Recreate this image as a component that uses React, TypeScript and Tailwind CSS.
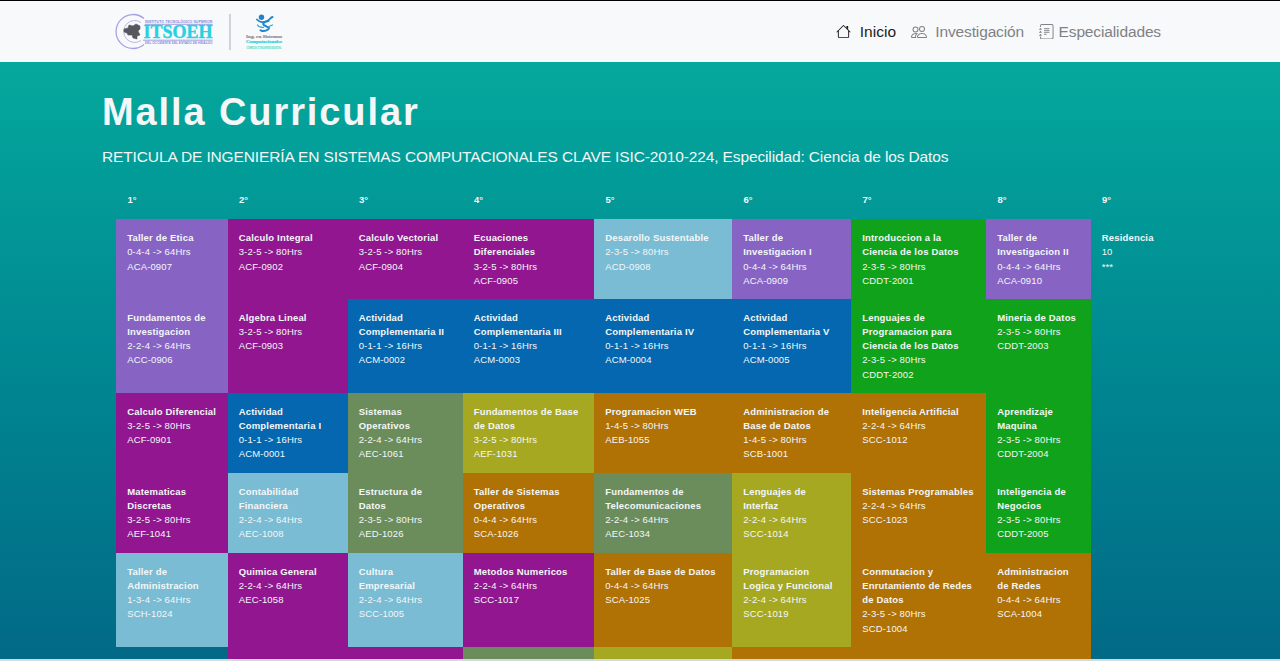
import { BsPeople, BsJournalText } from "react-icons/bs";

type Cell = { name: string[]; hours: string; code: string; color: string };

const violet = "bg-[#8764c4]";
const purple = "bg-[#91168f]";
const sky = "bg-[#7abcd4]";
const green = "bg-[#10a21a]";
const blue = "bg-[#0467b0]";
const sage = "bg-[#6b8d5c]";
const olive = "bg-[#a5a820]";
const orange = "bg-[#b07105]";
const none = "bg-transparent";

const c = (name: string, hours: string, code: string, color: string): Cell => ({
  name: name.split("|"),
  hours,
  code,
  color,
});

const h16 = "0-1-1 -> 16Hrs";
const h044 = "0-4-4 -> 64Hrs";
const h224 = "2-2-4 -> 64Hrs";
const h134 = "1-3-4 -> 64Hrs";
const h325 = "3-2-5 -> 80Hrs";
const h235 = "2-3-5 -> 80Hrs";
const h145 = "1-4-5 -> 80Hrs";

const cells: (Cell | null)[] = [
  c("Taller de Etica", h044, "ACA-0907", violet),
  c("Calculo Integral", h325, "ACF-0902", purple),
  c("Calculo Vectorial", h325, "ACF-0904", purple),
  c("Ecuaciones|Diferenciales", h325, "ACF-0905", purple),
  c("Desarollo Sustentable", h235, "ACD-0908", sky),
  c("Taller de|Investigacion I", h044, "ACA-0909", violet),
  c("Introduccion a la|Ciencia de los Datos", h235, "CDDT-2001", green),
  c("Taller de|Investigacion II", h044, "ACA-0910", violet),
  c("Residencia", "10", "***", none),

  c("Fundamentos de|Investigacion", h224, "ACC-0906", violet),
  c("Algebra Lineal", h325, "ACF-0903", purple),
  c("Actividad|Complementaria II", h16, "ACM-0002", blue),
  c("Actividad|Complementaria III", h16, "ACM-0003", blue),
  c("Actividad|Complementaria IV", h16, "ACM-0004", blue),
  c("Actividad|Complementaria V", h16, "ACM-0005", blue),
  c("Lenguajes de|Programacion para|Ciencia de los Datos", h235, "CDDT-2002", green),
  c("Mineria de Datos", h235, "CDDT-2003", green),
  null,

  c("Calculo Diferencial", h325, "ACF-0901", purple),
  c("Actividad|Complementaria I", h16, "ACM-0001", blue),
  c("Sistemas|Operativos", h224, "AEC-1061", sage),
  c("Fundamentos de Base|de Datos", h325, "AEF-1031", olive),
  c("Programacion WEB", h145, "AEB-1055", orange),
  c("Administracion de|Base de Datos", h145, "SCB-1001", orange),
  c("Inteligencia Artificial", h224, "SCC-1012", orange),
  c("Aprendizaje|Maquina", h235, "CDDT-2004", green),
  null,

  c("Matematicas|Discretas", h325, "AEF-1041", purple),
  c("Contabilidad|Financiera", h224, "AEC-1008", sky),
  c("Estructura de|Datos", h235, "AED-1026", sage),
  c("Taller de Sistemas|Operativos", h044, "SCA-1026", orange),
  c("Fundamentos de|Telecomunicaciones", h224, "AEC-1034", sage),
  c("Lenguajes de|Interfaz", h224, "SCC-1014", olive),
  c("Sistemas Programables", h224, "SCC-1023", orange),
  c("Inteligencia de|Negocios", h235, "CDDT-2005", green),
  null,

  c("Taller de|Administracion", h134, "SCH-1024", sky),
  c("Quimica General", h224, "AEC-1058", purple),
  c("Cultura|Empresarial", h224, "SCC-1005", sky),
  c("Metodos Numericos", h224, "SCC-1017", purple),
  c("Taller de Base de Datos", h044, "SCA-1025", orange),
  c("Programacion|Logica y Funcional", h224, "SCC-1019", olive),
  c("Conmutacion y|Enrutamiento de Redes|de Datos", h235, "SCD-1004", orange),
  c("Administracion|de Redes", h044, "SCA-1004", orange),
  null,
];

const lastRow = [none, purple, purple, sage, olive, orange, orange, orange, none];

function HouseIcon() {
  return (
    <svg viewBox="0 0 16 16" fill="currentColor" className="size-[15px]">
      <path d="M2 13.5V7h1v6.5a.5.5 0 0 0 .5.5h9a.5.5 0 0 0 .5-.5V7h1v6.5a1.500 1.500 0 0 1-1.500 1.500h-9A1.500 1.500 0 0 1 2 13.5zm11-11V6l-2-2V2.5a.5.5 0 0 1 .5-.5h1a.5.5 0 0 1 .5.5z" />
      <path d="M7.293 1.5a1 1 0 0 1 1.414 0l6.647 6.646a.5.5 0 0 1-.708.708L8 2.207 1.354 8.854a.5.5 0 1 1-.708-.708L7.293 1.5z" />
    </svg>
  );
}

function InstituteLogo() {
  return (
    <svg viewBox="0 0 102 38" className="h-[38px] w-[102px] overflow-visible" fontFamily="Liberation Sans, sans-serif">
      <path d="M30 5.500 A17 17 0 1 0 30 31.500" fill="none" stroke="#a5a1e6" strokeWidth="1.300" />
      <path d="M27 9.500 A11 11 0 1 0 27 27.500" fill="none" stroke="#b9b6ea" strokeWidth="1" />
      <path d="M10 16l4-1 1-3 4 1 3-2 4 2 0 3-2 2 2 4-3 1 0 3-4-1-1-3-4 0-1-2-3-1z" fill="#55595e" stroke="#55595e" strokeWidth=".6" strokeLinejoin="round" />
      <text x="31" y="10.300" fontSize="4" fontWeight="bold" fill="#8a87dc" textLength="67.500" lengthAdjust="spacingAndGlyphs">INSTITUTO TECNOLÓGICO SUPERIOR</text>
      <path d="M31 11.300H98.500M29 27.200H98.500" stroke="#7c79d8" strokeWidth=".7" />
      <text x="29.500" y="25.300" fontFamily="Liberation Serif, serif" fontSize="18.500" fontWeight="bold" fill="#27d0e2" stroke="#27d0e2" strokeWidth=".4" textLength="69" lengthAdjust="spacingAndGlyphs">ITSOEH</text>
      <text x="31" y="31" fontSize="3.400" fontWeight="bold" fill="#8a87dc" textLength="67.500" lengthAdjust="spacingAndGlyphs">DEL OCCIDENTE DEL ESTADO DE HIDALGO</text>
    </svg>
  );
}

function CareerLogo() {
  return (
    <svg viewBox="0 0 38 38" className="size-[38px] overflow-visible" fontFamily="Liberation Serif, serif" fontWeight="bold">
      <circle cx="16.500" cy="4.200" r="2.700" fill="#1f83cc" />
      <path d="M12 6.500c3 3.500 7 3 10 1.500s3-3 5.500-4" fill="none" stroke="#2088ca" strokeWidth="1.900" strokeLinecap="round" />
      <path d="M23.500 8c-4 .5-7 3-4 4.500s6 2 3.500 4-6 1.500-7.500.8" fill="none" stroke="#2088ca" strokeWidth="2" strokeLinecap="round" />
      <path d="M12.500 12c1.500 2.500 4 2.500 6 2.300M24 13.500l3.500-1.500" fill="none" stroke="#36a4d8" strokeWidth="1.300" strokeLinecap="round" />
      <text x="1" y="24.800" fontSize="4.800" fill="#8b8f96" stroke="#8b8f96" strokeWidth=".2" textLength="36" lengthAdjust="spacingAndGlyphs">Ing. en Sistemas</text>
      <text x="1" y="30.300" fontSize="4.800" fill="#2bcfe2" stroke="#2bcfe2" strokeWidth=".2" textLength="36" lengthAdjust="spacingAndGlyphs">Computacionales</text>
      <text x="1.500" y="35.700" fontSize="3" fill="#5fe0c4" stroke="#5fe0c4" strokeWidth=".15" textLength="35" lengthAdjust="spacingAndGlyphs">CIENCIA Y TALENTO DIGITAL</text>
    </svg>
  );
}

export default function App() {
  return (
    <div className="flex h-[661px] flex-col overflow-hidden bg-white font-['Liberation_Sans',Arial,sans-serif]">
      <header className="flex h-[62px] shrink-0 items-center justify-between border-t border-black bg-[#f8f9fb] pr-[119px] pl-[114px]">
        <div className="flex items-center">
          <InstituteLogo />
          <div className="ml-[13px] h-9 w-[2px] bg-[#d2d3d6]" />
          <div className="ml-[14px]">
            <CareerLogo />
          </div>
        </div>
        <nav className="flex items-center text-[15.500px] tracking-[-0.130px] text-[#808184]">
          <a className="flex items-center gap-[9px] tracking-[0.050px] text-[#1b1b1c]"><HouseIcon />Inicio</a>
          <a className="ml-[15px] flex items-center gap-2"><BsPeople className="size-4" />Investigación</a>
          <a className="ml-[15px] flex items-center gap-1"><BsJournalText className="size-[15.500px]" />Especialidades</a>
        </nav>
      </header>
      <main className="min-h-0 flex-1 overflow-hidden bg-linear-to-b from-[#05a89c] to-[#026986] pl-[102px] text-[#f4f7f7]">
        <h1 className="mt-[27px] h-[46px] text-[38px] leading-[46px] font-bold tracking-[1.900px] whitespace-nowrap">Malla Curricular</h1>
        <p className="mt-[10px] h-6 text-[15.500px] leading-6 tracking-[-0.130px] whitespace-nowrap">RETICULA DE INGENIERÍA EN SISTEMAS COMPUTACIONALES CLAVE ISIC-2010-224, Especilidad: Ciencia de los Datos</p>
        <div className="mt-[13px] ml-[14px] grid grid-cols-[111.500px_120px_115px_131.500px_138px_119px_135px_104.500px_76px] grid-rows-[37px_79.600px_94px_80px_80px_94px_20px] text-[9.500px] leading-[14.250px] tracking-[0.140px]">
          {["1°", "2°", "3°", "4°", "5°", "6°", "7°", "8°", "9°"].map((t) => (
            <div key={t} className="px-[11.400px] pt-[11.400px] font-bold">{t}</div>
          ))}
          {cells.map((cell, i) =>
            cell ? (
              <div key={i} className={`px-[11.200px] pt-[12px] whitespace-nowrap ${cell.color}`}>
                {cell.name.map((line) => (
                  <div key={line} className="font-bold tracking-[0.180px]">{line}</div>
                ))}
                <div>{cell.hours}</div>
                <div>{cell.code}</div>
              </div>
            ) : (
              <div key={i} />
            ),
          )}
          {lastRow.map((color, i) => (
            <div key={i} className={color} />
          ))}
        </div>
      </main>
      <div className="h-[2px] shrink-0 bg-[#d3dadd]" />
    </div>
  );
}
